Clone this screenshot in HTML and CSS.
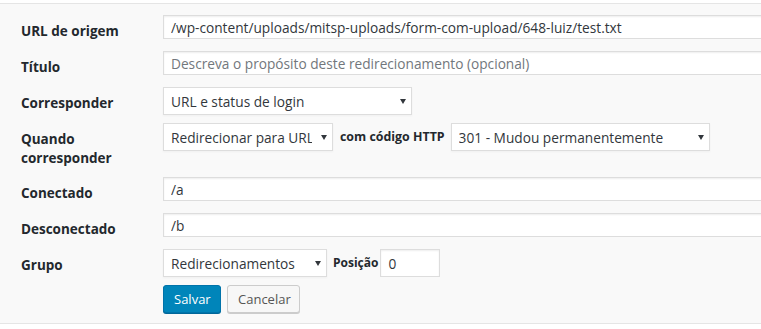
FILE: index.html
```html
<!DOCTYPE html>
<html lang="pt-BR">

<head>
    <meta charset="UTF-8">
    <meta name="viewport" content="width=device-width, initial-scale=1.0">
    <title>Editar redirecionamento</title>
    <link rel="stylesheet" href="styles.css">
</head>

<body>

    <div class="edit-panel">
        <form action="" id="redirectEdit">
            <div class="form-row">
                <label for="sourceUrl">URL de origem</label>
                <input type="text" id="sourceUrl" class="wide" value="/wp-content/uploads/mitsp-uploads/form-com-upload/648-luiz/test.txt">
            </div>
            <div class="form-row">
                <label for="title">Título</label>
                <input type="text" id="title" class="wide" placeholder="Descreva o propósito deste redirecionamento (opcional)">
            </div>
            <div class="form-row">
                <label for="matchType">Corresponder</label>
                <span class="select-wrap">
                    <select id="matchType" class="match-select">
                        <option>URL e status de login</option>
                    </select>
                </span>
            </div>
            <div class="form-row tall">
                <label for="actionType">Quando corresponder</label>
                <span class="select-wrap">
                    <select id="actionType" class="action-select">
                        <option>Redirecionar para URL</option>
                    </select>
                </span>
                <span class="inline-label">com código HTTP</span>
                <span class="select-wrap">
                    <select id="actionCode" class="code-select">
                        <option>301 - Mudou permanentemente</option>
                    </select>
                </span>
            </div>
            <div class="form-row">
                <label for="loggedIn">Conectado</label>
                <input type="text" id="loggedIn" class="wide" value="/a">
            </div>
            <div class="form-row">
                <label for="loggedOut">Desconectado</label>
                <input type="text" id="loggedOut" class="wide" value="/b">
            </div>
            <div class="form-row">
                <label for="group">Grupo</label>
                <span class="select-wrap">
                    <select id="group" class="group-select">
                        <option>Redirecionamentos</option>
                    </select>
                </span>
                <span class="inline-label tight">Posição</span>
                <input type="text" id="position" class="position" value="0">
            </div>
            <div class="form-row actions">
                <button type="submit" class="button-primary">Salvar</button>
                <button type="button" class="button">Cancelar</button>
            </div>
        </form>
    </div>

</body>

</html>
```

FILE: styles.css
```css
body {
    font-family: 'Open Sans', sans-serif;
    background-color: #fff;
    color: #23282d;
    margin: 0;
    padding-top: 3px;
    overflow: hidden;
}

.edit-panel {
    background-color: #f9f9f9;
    border-top: 1px solid #e5e5e5;
    border-bottom: 1px solid #e5e5e5;
    padding: 11px 0 9px 21px;
    overflow: hidden;
}

.form-row {
    display: flex;
    align-items: flex-start;
    height: 36px;
}

.form-row.tall {
    height: 54px;
}

.form-row.actions {
    height: 29px;
    padding-left: 142px;
}

.form-row label {
    flex: 0 0 142px;
    font-size: 13.5px;
    font-weight: 700;
    line-height: 19px;
    padding-top: 7px;
}

.form-row.tall label {
    padding-right: 40px;
    box-sizing: border-box;
}

input, select {
    font-family: inherit;
    font-size: 13.7px;
    color: #32373c;
    background-color: #fff;
    border: 1px solid #ddd;
    box-shadow: inset 0 1px 2px rgba(0, 0, 0, 0.07);
    margin: 0;
    box-sizing: border-box;
    outline: none;
}

input {
    height: 24px;
    padding: 0 7px;
}

input::placeholder {
    color: #72777c;
}

.wide {
    flex: 0 0 600px;
}

.select-wrap {
    position: relative;
    display: inline-block;
}

.select-wrap::after {
    content: "";
    position: absolute;
    right: 6px;
    top: 12px;
    border-left: 3px solid transparent;
    border-right: 3px solid transparent;
    border-top: 5px solid #32373c;
    pointer-events: none;
}

select {
    appearance: none;
    -webkit-appearance: none;
    height: 28px;
    padding: 0 20px 0 7px;
    box-shadow: 0 1px 2px rgba(0, 0, 0, 0.04);
}

.match-select {
    width: 249px;
}

.action-select {
    width: 170px;
}

.code-select {
    width: 259px;
}

.group-select {
    width: 164px;
}

.inline-label {
    font-size: 12.4px;
    font-weight: 700;
    line-height: 28px;
    margin: 0 6px 0 7px;
}

.inline-label.tight {
    font-size: 12px;
    margin: 0 2px 0 6px;
}

.position {
    width: 60px;
    height: 28px;
}

.button-primary, .button {
    font-family: inherit;
    font-size: 13px;
    height: 28px;
    padding: 0 10px;
    border-radius: 3px;
    cursor: pointer;
    margin-right: 6px;
}

.button-primary {
    background-color: #0085ba;
    border: 1px solid #0073aa;
    box-shadow: 0 1px 0 #006799;
    color: #fff;
    width: 58px;
}

.button {
    background-color: #f7f7f7;
    border: 1px solid #ccc;
    box-shadow: 0 1px 0 #ccc;
    color: #555;
    width: 73px;
}
```
